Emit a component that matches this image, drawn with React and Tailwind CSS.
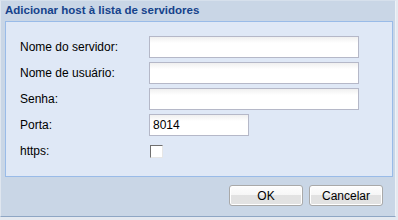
export default function App() {
  const font = { fontFamily: '"Liberation Sans", Arial, sans-serif' };
  return (
    <div className="w-[398px] h-[220px] bg-[#e4e9f0]" style={font}>
      <div className="w-[396px] h-[217px] bg-[#c9d6e6] border-l border-t border-l-[#dfe6ef] border-t-[#d6e0ec] border-r border-r-[#eef2f7] border-b border-b-[#8ea6c4] flex flex-col">
        <div className="h-[20px] pl-[4px] flex items-center text-[11.5px] font-bold text-[#15428b]">
          Adicionar host à lista de servidores
        </div>
        <div className="ml-[4px] w-[388px] h-[156px] bg-[#dfe8f6] border border-[#99bbe8] pt-[14px] pl-[14px] flex flex-col gap-[4px] text-[12px] text-black">
          <Row label="Nome do servidor:" width="w-[210px]" />
          <Row label="Nome de usuário:" width="w-[210px]" />
          <Row label="Senha:" width="w-[210px]" />
          <Row label="Porta:" width="w-[100px]" value="8014" />
          <div className="h-[22px] flex items-center">
            <span className="w-[129px]">https:</span>
            <span className="ml-[1px] w-[13px] h-[13px] bg-white border border-t-[#6f6f6f] border-l-[#6f6f6f] border-r-[#e6e6e6] border-b-[#e6e6e6]"></span>
          </div>
        </div>
        <div className="flex justify-end gap-[6px] pr-[12px] pt-[8px]">
          <Btn>OK</Btn>
          <Btn>Cancelar</Btn>
        </div>
      </div>
    </div>
  );
}

function Row({ label, width, value }) {
  return (
    <div className="h-[22px] flex items-center">
      <span className="w-[129px]">{label}</span>
      <div className={`${width} h-[22px] border border-[#b5b8c8] bg-gradient-to-b from-[#f0f0f0] to-white to-[30%] flex items-center px-[3px] text-[12px]`}>
        {value}
      </div>
    </div>
  );
}

function Btn({ children }) {
  return (
    <div className="w-[74px] h-[21px] rounded-[3px] border border-[#a9a9a9] bg-gradient-to-b from-[#fdfdfd] via-[#f6f6f6] via-50% to-[#e2e2e2] to-50% flex items-center justify-center text-[12px] text-black shadow-[inset_0_0_0_1px_#ffffff]">
      {children}
    </div>
  );
}
